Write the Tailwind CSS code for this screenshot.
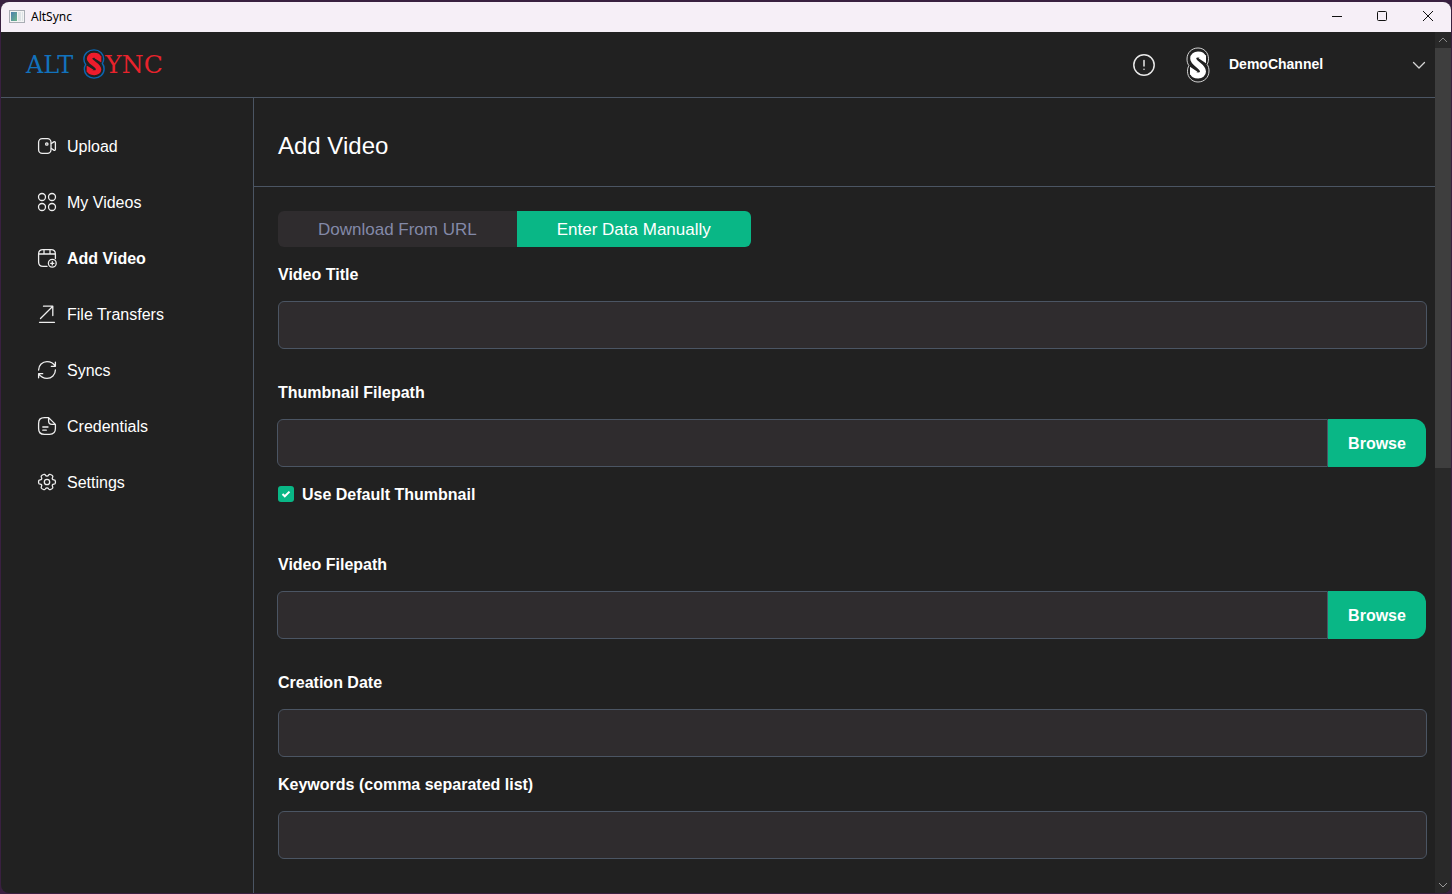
<!DOCTYPE html>
<html lang="en">
<head>
<meta charset="utf-8">
<title>AltSync</title>
<script src="https://cdn.jsdelivr.net/npm/@tailwindcss/browser@4"></script>
</head>
<body class="flex min-h-screen flex-col bg-[#392040] px-px pt-0.5 pb-px font-['Liberation_Sans',Arial,sans-serif] text-base text-white">
<svg class="hidden" aria-hidden="true">
  <symbol id="s-mark" viewBox="0 0 24 36" preserveAspectRatio="none">
    <path d="M17 10.500C16.500 8.500 14.500 7.500 12 7.500C9.200 7.500 7.200 9 7.200 11.500C7.200 16.500 17 18.800 17 24.500C17 27 15 28.500 12.200 28.500C9.500 28.500 7.500 27.500 7 25.500" fill="none" stroke="currentColor" stroke-width="6"/>
    <path d="M12.500 11.200L20 8V16.200ZM11.500 24.800L4 28V19.800Z" fill="currentColor"/>
  </symbol>
  <symbol id="s-ring" viewBox="0 0 24 36" preserveAspectRatio="none">
    <path d="M12 1C5.700 1 1 5.700 1 12C1 14.500 1.500 16.700 2.900 18.600C1.900 20.300 1.500 22.300 1.500 24.300C1.500 30.300 6 35 12 35C18.300 35 23 30.300 23 24C23 21.500 22.500 19.300 21.100 17.400C22.100 15.700 22.500 13.700 22.500 11.700C22.500 5.700 18 1 12 1Z" fill="none" stroke="currentColor"/>
  </symbol>
</svg>
<div class="flex grow flex-col overflow-hidden rounded-lg bg-[#212121]">
  <div class="flex h-[30px] items-center bg-[#f6eff7] pl-2 font-['Noto_Sans',sans-serif] text-xs text-black">
    <svg class="h-4 w-4" viewBox="0 0 16 16" aria-hidden="true">
      <defs><linearGradient id="pane" x1="0" y1="0" x2="1" y2="1"><stop offset="0" stop-color="#4a7fae"/><stop offset="1" stop-color="#6db58a"/></linearGradient></defs>
      <rect x=".5" y="1.500" width="15" height="12" fill="#f4f4f4" stroke="#a9adb4"/>
      <rect x="2" y="3" width="6" height="9" fill="url(#pane)"/>
      <rect x="9" y="3" width="3" height="9" fill="#dde3e6"/><rect x="13" y="3" width="1" height="9" fill="#dde3e6"/>
    </svg>
    <span class="ml-1.5 grow">AltSync</span>
    <button aria-label="Minimize" class="flex h-full w-[46px] items-center justify-center"><svg class="h-3 w-3" viewBox="0 0 12 12" fill="none" stroke="#111"><path d="M0 5.500h10"/></svg></button>
    <button aria-label="Maximize" class="flex h-full w-11 items-center justify-center"><svg class="h-3 w-3" viewBox="0 0 12 12" fill="none" stroke="#111"><rect x=".5" y=".5" width="9" height="9" rx="1"/></svg></button>
    <button aria-label="Close" class="flex h-full w-[46px] items-center justify-center"><svg class="h-3 w-3" viewBox="0 0 12 12" fill="none" stroke="#111"><path d="M1 0l10 10M11 0L1 10"/></svg></button>
  </div>

  <div class="flex grow">
    <div class="flex grow flex-col">
      <header class="flex h-[66px] items-center border-b border-[#4b5563] pr-[9px] pl-[25px]">
        <a href="#" aria-label="Alt Sync" class="flex items-center font-['DejaVu_Serif',serif] text-2xl leading-8 text-[#1272bc]">
          <span>ALT</span>
          <span class="ml-2.5 grid h-[30px] w-[22px] self-start text-[#ee1c2c]">
            <svg class="col-start-1 row-start-1 h-[30px] w-[22px] text-[#0b66b0]" stroke-width="1.600"><use href="#s-ring"/></svg>
            <svg class="col-start-1 row-start-1 h-[30px] w-[22px]"><use href="#s-mark"/></svg>
          </span>
          <span class="text-[25px] text-[#e8232c]">YNC</span>
        </a>
        <button aria-label="Notices" class="ml-auto">
          <svg class="h-6 w-6" viewBox="0 0 24 24" fill="none" stroke="#e8e8e8" stroke-width="1.500" stroke-linecap="round"><circle cx="12" cy="12" r="10.200"/><path d="M12 7.500v5.500M12 16.200v.100"/></svg>
        </button>
        <button class="ml-[30px] flex w-[240px] items-center">
          <span class="grid h-9 w-6">
            <svg class="col-start-1 row-start-1 h-9 w-6" stroke-width=".8"><use href="#s-ring"/></svg>
            <svg class="col-start-1 row-start-1 h-9 w-6"><use href="#s-mark"/></svg>
          </span>
          <span class="ml-[19px] grow pb-0.5 text-left text-sm font-bold">DemoChannel</span>
          <svg class="h-3.5 w-3.5" viewBox="0 0 14 14" fill="none" stroke="#d4d4d4" stroke-width="1.300" stroke-linecap="round" stroke-linejoin="round"><path d="M1.500 4.500L7 10l5.500-5.500"/></svg>
        </button>
      </header>

      <div class="flex grow">
        <nav class="w-[253px] shrink-0 border-r border-[#4b5563] pt-5 pl-9">
          <a href="#" class="flex h-14 items-center gap-2.5"><svg class="h-5 w-5" viewBox="0 0 20 20" fill="none" stroke="#eee" stroke-width="1.300" stroke-linejoin="round"><rect x="1.600" y="2.600" width="12.400" height="14.800" rx="3.600"/><path d="M14 7.800L16.800 5.900C17.600 5.400 18.400 5.800 18.400 6.700V13.300C18.400 14.200 17.600 14.600 16.800 14.100L14 12.200"/><circle cx="9.800" cy="8" r="1.200"/></svg><span class="pt-0.5">Upload</span></a>
          <a href="#" class="flex h-14 items-center gap-2.5"><svg class="h-5 w-5" viewBox="0 0 20 20" fill="none" stroke="#eee" stroke-width="1.300"><circle cx="5" cy="5" r="3.500"/><circle cx="15" cy="5" r="3.500"/><circle cx="5" cy="15" r="3.500"/><circle cx="15" cy="15" r="3.500"/></svg><span class="pt-0.5">My Videos</span></a>
          <a href="#" aria-current="page" class="flex h-14 items-center gap-2.5 font-bold"><svg class="h-5 w-5" viewBox="0 0 20 20" fill="none" stroke="#eee" stroke-width="1.300" stroke-linecap="round"><path d="M10 18.400H6C3 18.400 1.600 17 1.600 14V6C1.600 3 3 1.600 6 1.600H14C17 1.600 18.400 3 18.400 6V10.500M1.600 6H18.400M7 1.600V6M13 1.600V6"/><circle cx="15.300" cy="15.300" r="3.900"/><path d="M15.300 13.700v3.200M13.700 15.300h3.200"/></svg><span class="pt-0.5">Add Video</span></a>
          <a href="#" class="flex h-14 items-center gap-2.5"><svg class="h-5 w-5" viewBox="0 0 20 20" fill="none" stroke="#eee" stroke-width="1.300" stroke-linecap="round" stroke-linejoin="round"><path d="M3.500 14.500L15.800 2.200M6.500 2.200H15.800V11.500M2.500 18.300H17.500"/></svg><span class="pt-0.5">File Transfers</span></a>
          <a href="#" class="flex h-14 items-center gap-2.5"><svg class="h-5 w-5" viewBox="0 0 20 20" fill="none" stroke="#eee" stroke-width="1.300" stroke-linecap="round" stroke-linejoin="round"><path d="M1.600 10A8.400 8.400 0 0 1 10 1.600C15.500 1.600 18.400 6.300 18.400 6.300M18.400 2.200V6.300H14.300M18.400 10A8.400 8.400 0 0 1 10 18.400C4.700 18.400 1.600 13.700 1.600 13.700M1.600 17.800V13.700H5.700"/></svg><span class="pt-0.5">Syncs</span></a>
          <a href="#" class="flex h-14 items-center gap-2.5"><svg class="h-5 w-5" viewBox="0 0 20 20" fill="none" stroke="#eee" stroke-width="1.300" stroke-linecap="round" stroke-linejoin="round"><path d="M18.400 8.400V12.600C18.400 16.800 16.800 18.400 12.600 18.400H7.400C3.200 18.400 1.600 16.800 1.600 12.600V7.400C1.600 3.200 3.200 1.600 7.400 1.600H11.600L18.400 8.400H15C12.500 8.400 11.600 7.500 11.600 5V1.600M5.800 11H11M5.800 14.200H9.300"/></svg><span class="pt-0.5">Credentials</span></a>
          <a href="#" class="flex h-14 items-center gap-2.5"><svg class="h-5 w-5" viewBox="0 0 20 20" fill="none" stroke="#eee" stroke-width="1.300" stroke-linejoin="round"><circle cx="10" cy="10" r="2.700"/><path d="M1.600 10.700V9.300C1.600 8.500 2.300 7.800 3.100 7.800C4.600 7.800 5.200 6.700 4.400 5.400C4 4.700 4.300 3.700 5 3.300L6.500 2.500C7.100 2.100 7.900 2.300 8.300 3L8.400 3.100C9.200 4.500 10.800 4.500 11.600 3.100L11.700 3C12.100 2.300 12.900 2.100 13.500 2.500L15 3.300C15.700 3.700 16 4.700 15.600 5.400C14.800 6.700 15.400 7.800 16.900 7.800C17.700 7.800 18.400 8.500 18.400 9.300V10.700C18.400 11.500 17.700 12.200 16.900 12.200C15.400 12.200 14.800 13.300 15.600 14.600C16 15.300 15.700 16.300 15 16.700L13.500 17.500C12.900 17.900 12.100 17.700 11.700 17L11.600 16.900C10.800 15.500 9.200 15.500 8.400 16.900L8.300 17C7.900 17.700 7.100 17.900 6.500 17.500L5 16.700C4.300 16.300 4 15.300 4.400 14.600C5.200 13.300 4.600 12.200 3.100 12.200C2.300 12.200 1.600 11.500 1.600 10.700Z"/></svg><span class="pt-0.5">Settings</span></a>
        </nav>

        <main class="grow">
          <h1 class="border-b border-[#4b5563] px-6 pt-8 pb-6 text-2xl leading-8">Add Video</h1>
          <form class="flex flex-col pt-6 pr-2 pb-4 pl-6">
            <div class="flex h-9 text-[17px]">
              <button type="button" class="rounded-l-md bg-[#2f2c2e] px-10 pt-0.5 text-[#8389a8]">Download From URL</button>
              <button type="button" class="rounded-r-md bg-[#09b786] px-10 pt-0.5">Enter Data Manually</button>
            </div>
            <label for="title" class="mt-4 font-bold">Video Title</label>
            <input id="title" type="text" class="mt-3.5 h-12 rounded-md border border-[#4b5563] bg-[#2f2c2e] px-4">

            <label for="thumb" class="mt-8 font-bold">Thumbnail Filepath</label>
            <div class="mt-3.5 -ml-px mr-px flex h-12">
              <input id="thumb" type="text" class="min-w-0 grow rounded-l-md border border-[#4b5563] bg-[#2f2c2e] px-4">
              <button type="button" class="w-[98px] rounded-r-xl bg-[#09b786] pt-0.5 font-bold">Browse</button>
            </div>
            <div class="mt-3.5 flex items-center gap-2">
              <span class="grid h-4 w-4">
                <input id="default-thumb" type="checkbox" checked class="col-start-1 row-start-1 h-4 w-4 appearance-none rounded-[3px] bg-[#09b786]">
                <svg class="pointer-events-none col-start-1 row-start-1 h-4 w-4" viewBox="0 0 16 16" fill="none" stroke="#fff" stroke-width="2"><path d="M4.500 8l2.300 2.300L11.500 5.600"/></svg>
              </span>
              <label for="default-thumb" class="pt-0.5 font-bold">Use Default Thumbnail</label>
            </div>

            <label for="video" class="mt-[46px] font-bold">Video Filepath</label>
            <div class="mt-3.5 -ml-px mr-px flex h-12">
              <input id="video" type="text" class="min-w-0 grow rounded-l-md border border-[#4b5563] bg-[#2f2c2e] px-4">
              <button type="button" class="w-[98px] rounded-r-xl bg-[#09b786] pt-0.5 font-bold">Browse</button>
            </div>

            <label for="date" class="mt-8 font-bold">Creation Date</label>
            <input id="date" type="text" class="mt-3.5 h-12 rounded-md border border-[#4b5563] bg-[#2f2c2e] px-4">

            <label for="keywords" class="mt-4 font-bold">Keywords (comma separated list)</label>
            <input id="keywords" type="text" class="mt-3.5 h-12 rounded-md border border-[#4b5563] bg-[#2f2c2e] px-4">
          </form>
        </main>
      </div>
    </div>

    <div class="flex w-4 shrink-0 flex-col bg-[#292929]" aria-hidden="true">
      <svg class="h-4 w-4" viewBox="0 0 16 16" fill="none" stroke="#888"><path d="M4 10l4-4 4 4"/></svg>
      <div class="h-[420px] bg-[#3e3e3e]"></div>
      <svg class="mt-auto h-4 w-4" viewBox="0 0 16 16" fill="none" stroke="#999"><path d="M4 6l4 4 4-4"/></svg>
    </div>
  </div>
</div>
</body>
</html>
